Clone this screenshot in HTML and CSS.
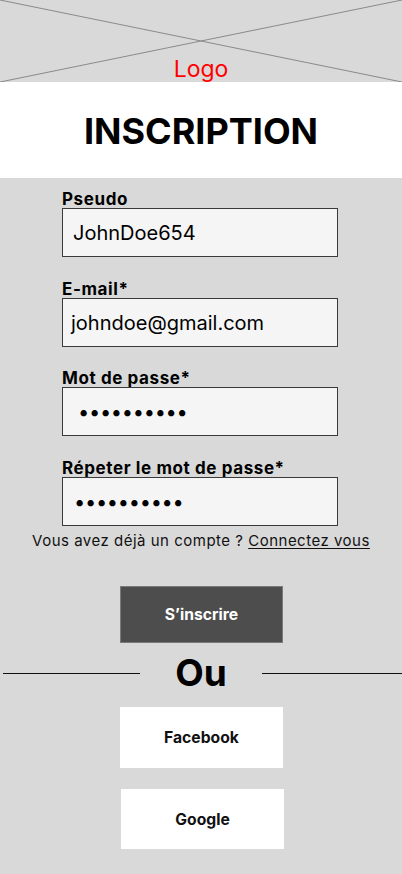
FILE: index.html
```html
<!DOCTYPE html>
<html lang="fr">
<head>
<meta charset="utf-8">
<title>Inscription</title>
<link rel="stylesheet" href="styles.css">
</head>
<body>
<div class="page">
  <header class="logo-area">
    <svg class="logo-cross" viewBox="0 0 402 82" preserveAspectRatio="none" aria-hidden="true">
      <line x1="0" y1="0" x2="402" y2="82" stroke="#8a8a8a" stroke-width="1"/>
      <line x1="402" y1="0" x2="0" y2="82" stroke="#8a8a8a" stroke-width="1"/>
    </svg>
    <span class="logo-text">Logo</span>
  </header>
  <div class="title-band">
    <h1 class="title">INSCRIPTION</h1>
  </div>
  <form class="form">
    <div class="field">
      <label class="label">Pseudo</label>
      <div class="input input-pseudo">JohnDoe654</div>
    </div>
    <div class="field field-mail">
      <label class="label">E-mail*</label>
      <div class="input input-mail">johndoe@gmail.com</div>
    </div>
    <div class="field field-pass">
      <label class="label">Mot de passe*</label>
      <div class="input input-pass">••••••••••</div>
    </div>
    <div class="field field-pass2">
      <label class="label">Répeter le mot de passe*</label>
      <div class="input input-pass2">••••••••••</div>
    </div>
  </form>
  <p class="account">Vous avez déjà un compte ? <a class="account-link">Connectez vous</a></p>
  <div class="actions">
    <div class="btn btn-dark">S’inscrire</div>
  </div>
  <div class="separator">
    <span class="sep-line sep-left"></span>
    <span class="sep-text">Ou</span>
    <span class="sep-line sep-right"></span>
  </div>
  <div class="socials">
    <div class="btn btn-white btn-fb">Facebook</div>
    <div class="btn btn-white btn-google">Google</div>
  </div>
</div>
</body>
</html>
```
FILE: styles.css
```css
* { box-sizing: border-box; }
html, body { margin: 0; padding: 0; }
body {
  background: #d9d9d9;
  font-family: Inter, "Noto Sans", "Liberation Sans", sans-serif;
  color: #000;
}
.page {
  width: 402px;
  height: 874px;
  overflow: hidden;
  display: flex;
  flex-direction: column;
}
.logo-area {
  position: relative;
  height: 82px;
  display: flex;
  align-items: flex-end;
  justify-content: center;
}
.logo-cross {
  position: absolute;
  inset: 0;
  width: 100%;
  height: 100%;
}
.logo-text {
  position: relative;
  color: #ff0000;
  font-size: 23px;
  line-height: 28px;
  margin-bottom: -1px;
}
.title-band {
  background: #fff;
  height: 96px;
  display: flex;
  align-items: center;
  justify-content: center;
}
.title {
  margin: 0;
  font-size: 36px;
  font-weight: 700;
  line-height: 1;
  padding-top: 1px;
}
.form {
  margin: 12px 0 0 62px;
  width: 276px;
  display: flex;
  flex-direction: column;
}
.field {
  display: flex;
  flex-direction: column;
}
.field-mail { margin-top: 23px; }
.field-pass { margin-top: 22px; }
.field-pass2 { margin-top: 23px; }
.label {
  font-size: 17px;
  font-weight: 700;
  line-height: 18px;
  height: 18px;
  letter-spacing: 0.6px;
}
.input {
  height: 49px;
  background: #f5f5f5;
  border: 1px solid #3a3a3a;
  display: flex;
  align-items: center;
  font-size: 20px;
  white-space: nowrap;
}
.input-pseudo { padding-left: 10px; }
.input-mail { padding-left: 8px; }
.input-pass { padding-left: 15px; letter-spacing: -0.3px; padding-top: 1px; }
.input-pass2 { padding-left: 11px; letter-spacing: -0.3px; }
.account {
  margin: 4px 0 0;
  text-align: center;
  font-size: 15px;
  line-height: 22px;
  letter-spacing: 0.5px;
  color: #111;
}
.account-link {
  text-decoration: underline;
  text-underline-offset: 2px;
}
.actions {
  display: flex;
  justify-content: center;
  margin-top: 34px;
  padding-left: 1px;
}
.btn {
  width: 163px;
  display: flex;
  align-items: center;
  justify-content: center;
  font-size: 15.7px;
  font-weight: 700;
}
.btn-dark {
  height: 57px;
  background: #4d4d4d;
  border: 1px solid #7a7a7a;
  color: #fff;
}
.separator {
  display: flex;
  align-items: center;
  margin-top: 12px;
  height: 36px;
  padding-left: 3px;
}
.sep-line {
  height: 1px;
  background: #111;
}
.sep-left { width: 137px; }
.sep-right { flex: 1; }
.sep-text {
  width: 122px;
  text-align: center;
  font-size: 37px;
  font-weight: 700;
  line-height: 36px;
}
.socials {
  margin-top: 16px;
  display: flex;
  flex-direction: column;
  align-items: center;
  gap: 21px;
  padding-left: 1px;
}
.btn-white {
  height: 61px;
  background: #fff;
  color: #111;
}
.btn-google { margin-left: 2px; height: 60px; }
```
